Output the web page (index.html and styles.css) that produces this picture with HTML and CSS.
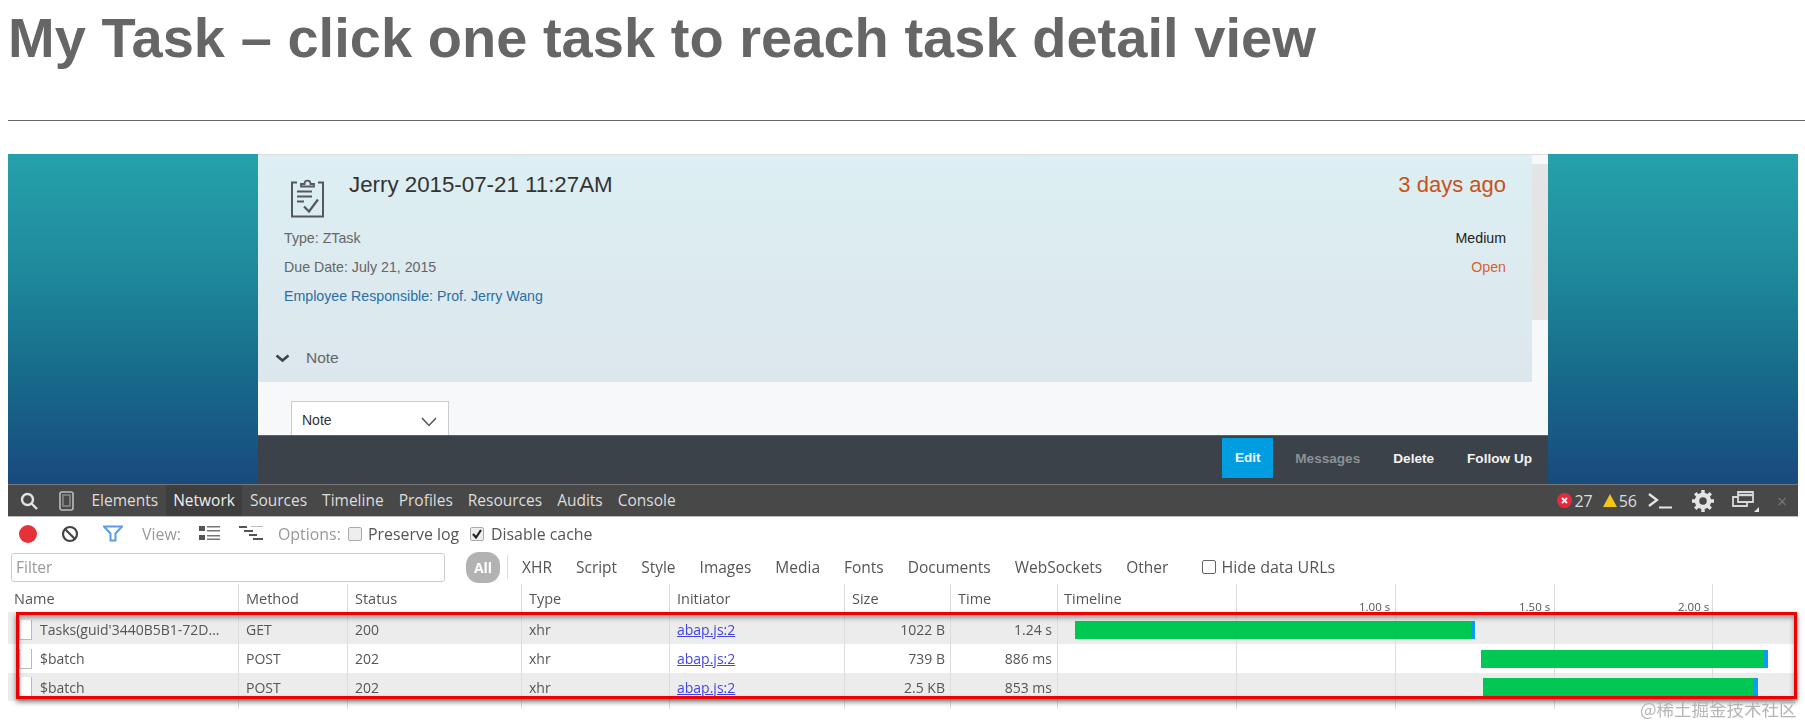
FILE: index.html
```html
<!DOCTYPE html>
<html lang="en">
<head>
<meta charset="utf-8">
<title>My Task</title>
<link rel="stylesheet" href="styles.css">
</head>
<body>
<header class="slide-head">
  <h1 class="slide-title">My Task – click one task to reach task detail view</h1>
  <hr class="slide-rule">
</header>
<main class="shot">
  <section class="app">
    <div class="card">
      <div class="card-body">
        <div class="card-main">
          <div class="panel">
            <div class="head">
              <div class="head-left">
                <svg class="clip" viewBox="0 0 35 40" fill="none" stroke="#55595c" stroke-width="2">
                  <path d="M7 5H2V39H33V5H28"/>
                  <path d="M11 9H24V6.500H20.500C20.500 2 14.500 2 14.500 6.500H11Z" stroke-width="1.800"/>
                  <path d="M7 14H22M7 19H22M7 24H14" stroke-width="1.800"/>
                  <path d="M14 29L19 34L28 22" stroke-width="2.200"/>
                </svg>
                <div class="task-title">Jerry 2015-07-21 11:27AM</div>
              </div>
              <div class="age">3 days ago</div>
            </div>
            <div class="meta"><span>Type: ZTask</span><span class="prio">Medium</span></div>
            <div class="meta"><span>Due Date: July 21, 2015</span><span class="state">Open</span></div>
            <div class="meta meta-link"><span>Employee Responsible: Prof. Jerry Wang</span></div>
            <div class="note-toggle">
              <svg class="chev" viewBox="0 0 14 9" fill="none" stroke="#3f4347" stroke-width="2.600"><path d="M1 1.500L7 6.500L13 1.500"/></svg>
              <span>Note</span>
            </div>
          </div>
          <div class="form">
            <div class="select"><span>Note</span>
              <svg class="select-chev" viewBox="0 0 16 10" fill="none" stroke="#555" stroke-width="1.500"><path d="M1 1L8 8.500L15 1"/></svg>
            </div>
          </div>
        </div>
        <div class="scroll"><div class="thumb"></div></div>
      </div>
      <footer class="actions">
        <span class="act act-edit">Edit</span>
        <span class="act act-off">Messages</span>
        <span class="act">Delete</span>
        <span class="act">Follow Up</span>
      </footer>
    </div>
  </section>

  <section class="devtools">
    <div class="tabbar">
      <svg class="ic-search" viewBox="0 0 18 18" fill="none" stroke="#e2e2e2" stroke-width="2.400"><circle cx="7.500" cy="7.500" r="5.500"/><path d="M11.500 11.500L17 17"/></svg>
      <svg class="ic-phone" viewBox="0 0 15 20" fill="none" stroke="#bdbdbd" stroke-width="1.600"><rect x="1" y="1" width="13" height="18" rx="2"/><path d="M4 4H11V15H4Z" stroke="#8a8a8a"/></svg>
      <nav class="tabs">
        <span class="tab">Elements</span>
        <span class="tab tab-on">Network</span>
        <span class="tab">Sources</span>
        <span class="tab">Timeline</span>
        <span class="tab">Profiles</span>
        <span class="tab">Resources</span>
        <span class="tab">Audits</span>
        <span class="tab">Console</span>
      </nav>
      <div class="status">
        <svg class="ic-err" viewBox="0 0 15 15"><circle cx="7.500" cy="7.500" r="7.500" fill="#e8293c"/><path d="M5 5L10 10M10 5L5 10" stroke="#fff" stroke-width="1.800"/></svg>
        <span class="count">27</span>
        <svg class="ic-warn" viewBox="0 0 14 13"><path d="M7 0L14 13H0Z" fill="#f5c518"/></svg>
        <span class="count">56</span>
        <svg class="ic-prompt" viewBox="0 0 24 16" fill="none" stroke="#e8e8e8" stroke-width="2.200"><path d="M1 1L9 7L1 13M11 14.500H24"/></svg>
        <svg class="ic-gear" viewBox="0 0 22 22"><circle cx="11" cy="11" r="6" fill="none" stroke="#e4e4e4" stroke-width="4.500"/><path d="M11 0V22M0 11H22M3.200 3.200L18.800 18.800M18.800 3.200L3.200 18.800" stroke="#e4e4e4" stroke-width="3.400" stroke-dasharray="4 14"/></svg>
        <svg class="ic-dock" viewBox="0 0 28 22" fill="none" stroke="#d8d8d8" stroke-width="1.800"><path d="M6 12V2H21V12H6Z"/><path d="M6 5H21" stroke-width="2.400"/><path d="M6 7H1V16H15V12"/><path d="M27 17V22H22Z" fill="#e8e8e8" stroke="none"/></svg>
        <span class="close">×</span>
      </div>
    </div>

    <div class="toolbar">
      <span class="rec"></span>
      <svg class="ic-stop" viewBox="0 0 18 18" fill="none" stroke="#444" stroke-width="2.200"><circle cx="9" cy="9" r="7"/><path d="M4 4L14 14"/></svg>
      <svg class="ic-filter" viewBox="0 0 20 17" fill="none" stroke="#5b9bea" stroke-width="2"><path d="M1 1.500H19L12.500 8.500V15.500H7.500V8.500Z"/></svg>
      <span class="dim lbl-view">View:</span>
      <svg class="ic-list" viewBox="0 0 21 15" fill="#555"><rect width="6" height="5"/><rect y="9" width="6" height="5"/><path d="M8 0H21V1.500H8ZM8 4H21V5.500H8ZM8 9H21V10.500H8ZM8 12.500H21V14H8Z" fill="#777"/></svg>
      <svg class="ic-water" viewBox="0 0 24 15" fill="#555"><rect width="8" height="2"/><rect x="5" y="4" width="9" height="2"/><rect x="10" y="8" width="8" height="2"/><rect x="14" y="12" width="10" height="2"/><rect x="12" width="12" height="1" fill="#bbb"/></svg>
      <span class="dim lbl-opt">Options:</span>
      <span class="check check-a"></span>
      <span class="lbl-log">Preserve log</span>
      <span class="check check-b"><svg viewBox="0 0 12 12" fill="none" stroke="#222" stroke-width="2.200"><path d="M2 6L5 9.500L10 2"/></svg></span>
      <span class="lbl-cache">Disable cache</span>
    </div>

    <div class="filterbar">
      <div class="filter-input">Filter</div>
      <span class="pill">All</span>
      <span class="filter-sep"></span>
      <div class="types">
        <span>XHR</span><span>Script</span><span>Style</span><span>Images</span><span>Media</span><span>Fonts</span><span>Documents</span><span>WebSockets</span><span>Other</span>
      </div>
      <span class="check check-c"></span>
      <span class="lbl-hide">Hide data URLs</span>
    </div>

    <div class="table">
      <div class="row row-head">
        <div class="cell cell-name">Name</div><div class="cell">Method</div><div class="cell">Status</div><div class="cell">Type</div><div class="cell">Initiator</div><div class="cell">Size</div><div class="cell">Time</div>
        <div class="cell cell-tl tl-head"><span>Timeline</span><span class="tick tick-1">1.00 s</span><span class="tick tick-2">1.50 s</span><span class="tick tick-3">2.00 s</span></div>
      </div>
      <div class="row row-grey row-first">
        <div class="cell cell-file"><i class="file"></i>Tasks(guid'3440B5B1-72D...</div><div class="cell">GET</div><div class="cell">200</div><div class="cell">xhr</div><div class="cell"><a class="link">abap.js:2</a></div><div class="cell cell-num">1022 B</div><div class="cell cell-num">1.24 s</div>
        <div class="cell cell-tl"><div class="bar" style="margin-left:17px;width:400px"></div></div>
      </div>
      <div class="row">
        <div class="cell cell-file"><i class="file"></i>$batch</div><div class="cell">POST</div><div class="cell">202</div><div class="cell">xhr</div><div class="cell"><a class="link">abap.js:2</a></div><div class="cell cell-num">739 B</div><div class="cell cell-num">886 ms</div>
        <div class="cell cell-tl"><div class="bar" style="margin-left:423px;width:287px"></div></div>
      </div>
      <div class="row row-grey row-last">
        <div class="cell cell-file"><i class="file"></i>$batch</div><div class="cell">POST</div><div class="cell">202</div><div class="cell">xhr</div><div class="cell"><a class="link">abap.js:2</a></div><div class="cell cell-num">2.5 KB</div><div class="cell cell-num">853 ms</div>
        <div class="cell cell-tl"><div class="bar" style="margin-left:425px;width:275px"></div></div>
      </div>
      <div class="row row-fill">
        <div class="cell"></div><div class="cell"></div><div class="cell"></div><div class="cell"></div><div class="cell"></div><div class="cell"></div><div class="cell"></div><div class="cell cell-tl"></div>
      </div>
      <div class="redbox"></div>
    </div>
  </section>
</main>
<div class="watermark">@稀土掘金技术社区</div>
</body>
</html>
```

FILE: styles.css
```css
* { box-sizing: border-box; }
html, body { margin: 0; padding: 0; }
body {
  width: 1805px;
  height: 725px;
  overflow: hidden;
  background: #fff;
  position: relative;
  font-family: "Open Sans", "Liberation Sans", sans-serif;
}

/* slide heading */
.slide-head { padding: 0 0 0 8px; height: 154px; }
.slide-title {
  margin: 0;
  padding-top: 6px;
  font: bold 56px/64px "Liberation Sans", Arial, sans-serif;
  letter-spacing: .03px;
  color: #666;
  white-space: nowrap;
}
.slide-rule { border: 0; height: 1px; background: #666; margin: 50px 0 0; }

/* screenshot */
.shot { width: 1790px; margin-left: 8px; filter: blur(0.55px); }

.app {
  height: 330px;
  padding: 0 250px;
  background: linear-gradient(#26a1ab 0%, #1e8a9c 35%, #176c8c 65%, #184a7e 100%);
}
.card {
  height: 330px;
  display: flex;
  flex-direction: column;
  font-family: "Liberation Sans", Arial, sans-serif;
  border-top: 1px solid #ddd;
}
.card-body { flex: 1; display: flex; min-height: 0; background: #f7f8f9; }
.card-main { flex: 1; display: flex; flex-direction: column; min-width: 0; }
.panel {
  height: 227px;
  padding: 0 26px 0 26px;
  background: linear-gradient(#dceff3, #dce7ed);
}
.head { height: 68px; display: flex; justify-content: space-between; align-items: flex-start; }
.head-left { display: flex; align-items: flex-start; }
.clip { width: 35px; height: 41px; margin: 22px 24px 0 6px; }
.task-title { margin-top: 18px; font-size: 22.300px; line-height: 24px; color: #333; }
.age { margin-top: 18px; font-size: 22px; line-height: 24px; color: #c8511b; }
.meta {
  height: 29px;
  display: flex;
  justify-content: space-between;
  align-items: center;
  font-size: 14.200px;
  color: #666;
}
.meta-link { color: #2b6ea3; }
.prio { color: #222; }
.state { color: #d5622f; }
.note-toggle {
  display: flex;
  align-items: center;
  margin: 33px 0 0 -9px;
  height: 30px;
  font-size: 15.500px;
  color: #666;
}
.chev { width: 15px; height: 9px; margin-right: 16px; }
.form { flex: 1; padding: 19px 0 0 33px; min-height: 0; overflow: hidden; }
.select {
  width: 158px;
  height: 40px;
  padding: 0 10px;
  display: flex;
  justify-content: space-between;
  align-items: flex-start;
  background: #fff;
  border: 1px solid #ccc;
  font-size: 14px;
  line-height: 37px;
  color: #333;
}
.select-chev { width: 16px; height: 10px; margin: 15px 1px 0 0; }
.scroll { width: 16px; padding-top: 9px; }
.thumb { height: 156px; background: #e4e4e4; }
.actions {
  height: 49px;
  padding: 2px 16px 6px 0;
  display: flex;
  justify-content: flex-end;
  align-items: center;
  gap: 33px;
  background: #3b4249;
  border-top: 1px solid #5c6166;
  font-size: 13.600px;
  font-weight: bold;
  color: #f4f4f4;
}
.act-edit {
  width: 51px;
  height: 40px;
  margin-right: -11px;
  background: #009de0;
  line-height: 40px;
  text-align: center;
}
.act-off { color: #8c9196; }

/* devtools */
.devtools { color: #555; }
.tabbar {
  height: 33px;
  display: flex;
  align-items: center;
  background: #484848;
  border-bottom: 1px solid #bbb;
  border-top: 1px solid #777;
  color: #ddd;
}
.ic-search { width: 18px; height: 18px; margin-left: 12px; flex: none; }
.ic-phone { width: 15px; height: 20px; margin-left: 21px; flex: none; }
.tabs { display: flex; margin-left: 10px; font-size: 15.500px; height: 100%; }
.tab { padding: 0 7.500px; line-height: 30px; }
.tab-on { background: #3e3e3e; color: #eee; }
.status { margin-left: auto; display: flex; align-items: center; font-size: 16px; }
.ic-err { width: 15px; height: 15px; }
.count { margin-left: 2px; }
.ic-warn { width: 14px; height: 13px; margin-left: 10px; }
.ic-prompt { width: 24px; height: 16px; margin-left: 11px; }
.ic-gear { width: 22px; height: 22px; margin-left: 20px; }
.ic-dock { width: 28px; height: 22px; margin-left: 18px; }
.close { margin: 0 11px 0 17px; width: 10px; font-size: 18px; color: #777; line-height: 18px; }

.toolbar {
  height: 33px;
  display: flex;
  align-items: center;
  font-size: 15.900px;
  color: #555;
}
.rec { width: 18px; height: 18px; margin-left: 11px; border-radius: 50%; background: #e53238; flex: none; }
.ic-stop { width: 18px; height: 18px; margin-left: 24px; }
.ic-filter { width: 20px; height: 17px; margin-left: 24px; }
.dim { color: #999; }
.lbl-view { margin-left: 19px; width: 53px; }
.ic-list { width: 21px; height: 15px; margin-left: 4px; }
.ic-water { width: 24px; height: 15px; margin-left: 19px; }
.lbl-opt { margin-left: 15px; width: 63px; }
.check {
  display: inline-flex;
  width: 14px;
  height: 14px;
  border: 1px solid #aaa;
  border-radius: 2px;
  background: #eee;
  flex: none;
}
.check svg { width: 12px; height: 12px; }
.check-a { margin-left: 7px; }
.lbl-log { margin-left: 6px; width: 91px; white-space: nowrap; }
.check-b { margin-left: 11px; }
.lbl-cache { margin-left: 7px; white-space: nowrap; }

.filterbar {
  height: 32px;
  padding-top: 2px;
  display: flex;
  align-items: center;
  font-size: 15.500px;
  color: #555;
}
.filter-input {
  width: 434px;
  height: 29px;
  margin-left: 3px;
  padding-left: 4px;
  border: 1.500px solid #ccc;
  border-radius: 3px;
  color: #999;
  line-height: 27px;
  flex: none;
}
.pill {
  width: 34px;
  height: 31px;
  margin-left: 21px;
  border-radius: 13px;
  background: #b2b2b2;
  color: #fff;
  font-weight: 700;
  font-size: 14px;
  line-height: 31px;
  text-align: center;
  flex: none;
}
.filter-sep { width: 1px; height: 24px; margin-left: 7px; background: #ddd; }
.types { display: flex; gap: 24px; margin-left: 14px; white-space: nowrap; }
.check-c { margin-left: 34px; background: #fff; border-color: #666; }
.lbl-hide { margin-left: 5px; white-space: nowrap; font-size: 16px; }

.table { position: relative; font-size: 14px; color: #555; }
.row {
  display: grid;
  grid-template-columns: 231px 109px 174px 148px 175px 106px 107px 740px;
  height: 29px;
}
.row-head { height: 30px; padding-top: 2px; font-size: 14.500px; }
.row-first { height: 32px; padding-top: 3px; }
.row-last { height: 28px; }
.row-fill { height: 8px; }
.row-grey { background: #ececec; }
.cell {
  display: flex;
  align-items: center;
  padding-left: 7px;
  border-right: 1px solid #ddd;
  white-space: nowrap;
}
.cell-name { padding-left: 6px; }
.cell-file { padding-left: 11px; }
.cell-num { justify-content: flex-end; padding: 0 5px 0 0; }
.cell-tl {
  padding-left: 0;
  border-right: 0;
  background:
    linear-gradient(#ddd, #ddd) 178px 0 / 1px 100% no-repeat,
    linear-gradient(#ddd, #ddd) 337px 0 / 1px 100% no-repeat,
    linear-gradient(#ddd, #ddd) 496px 0 / 1px 100% no-repeat,
    linear-gradient(#ddd, #ddd) 654px 0 / 1px 100% no-repeat;
}
.tl-head { padding-left: 6px; position: relative; }
.tick { position: absolute; top: 16px; font-size: 11.500px; line-height: 14px; }
.tick-1 { left: 301px; }
.tick-2 { left: 461px; }
.tick-3 { left: 620px; }
.file {
  width: 13px;
  height: 20px;
  margin-right: 8px;
  background: #fff;
  border: 1px solid #bbb;
  border-width: 0 1px 1px 1px;
  flex: none;
}
.link { color: #4444e6; text-decoration: underline; }
.bar {
  height: 18px;
  background: linear-gradient(90deg, #00c853 calc(100% - 4px), #0a9cf0 calc(100% - 4px));
  flex: none;
}
.redbox {
  position: absolute;
  left: 7.500px;
  right: 1px;
  top: 30px;
  height: 87px;
  border: 3px solid #ee0000;
  box-shadow: 0 3px 5px rgba(0, 0, 0, .5), inset 0 3px 5px rgba(0, 0, 0, .35);
}

.watermark {
  position: absolute;
  left: 1640px;
  top: 698px;
  font: 17.500px/22px "Noto Sans CJK SC", sans-serif;
  color: #b5b5b5;
  white-space: nowrap;
}
```
